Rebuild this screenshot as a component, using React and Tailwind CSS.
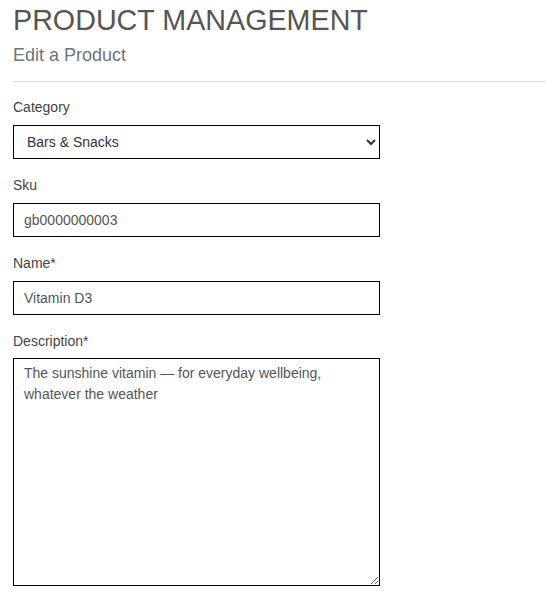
export default function App() {
  return (
    <div className="min-h-[603px] bg-white pl-[13px] font-['Liberation_Sans',Arial,sans-serif]">
      <h1 className="pt-[2px] text-[28.7px] leading-[36px] text-[#555] font-normal">PRODUCT MANAGEMENT</h1>
      <h2 className="mt-[6px] text-[18px] leading-[22px] text-[#6c757d]">Edit a Product</h2>
      <hr className="mt-[15px] border-t border-[#e0e0e0]" />

      <form className="mt-[15px] w-[367px] text-[14px] text-[#444]">
        <label className="block leading-[20px]">Category</label>
        <select
          defaultValue="bars"
          className="mt-[8px] block h-[34px] w-full border border-black bg-white pl-[9px] pr-[2px] text-[14px] text-[#333]"
        >
          <option value="bars">Bars &amp; Snacks</option>
          <option value="vit">Vitamins</option>
        </select>

        <label className="mt-[16px] block leading-[20px]">Sku</label>
        <input
          defaultValue="gb0000000003"
          className="mt-[8px] block h-[34px] w-full border border-black px-[10px] text-[14px] text-[#555] outline-none"
        />

        <label className="mt-[16px] block leading-[20px]">Name*</label>
        <input
          defaultValue="Vitamin D3"
          className="mt-[8px] block h-[34px] w-full border border-black px-[10px] text-[14px] text-[#555] outline-none"
        />

        <label className="mt-[16px] block leading-[20px]">Description*</label>
        <textarea
          defaultValue="The sunshine vitamin — for everyday wellbeing, whatever the weather"
          className="mt-[7px] block h-[228px] w-full border border-black px-[10px] py-[4px] text-[14px] leading-[21px] text-[#555] outline-none"
        />
      </form>
    </div>
  );
}
